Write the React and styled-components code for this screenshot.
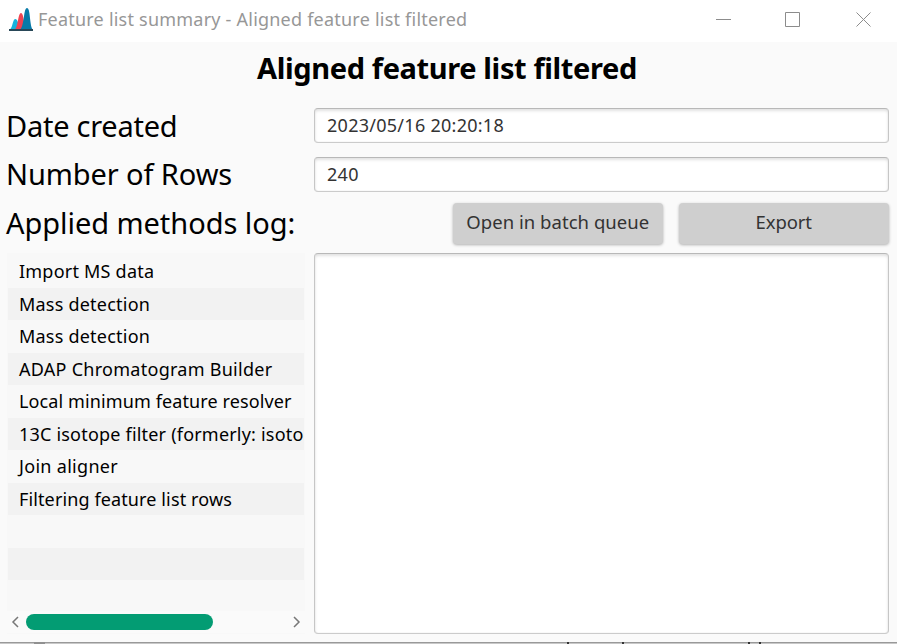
import React from "react";
import styled, { createGlobalStyle } from "styled-components";

const Global = createGlobalStyle`
  * { box-sizing: border-box; }
  body { margin: 0; overflow: hidden; background: #fff; font-family: "Noto Sans", "Open Sans", sans-serif; }
`;

const Window = styled.div`
  width: 899px;
  height: 644px;
  display: flex;
  flex-direction: column;
  background: #fff;
`;

const TitleBar = styled.header`
  height: 42px;
  flex: none;
  display: flex;
  align-items: flex-start;
  padding-left: 9px;
`;

const AppIcon = styled.svg`
  width: 24px;
  height: 24px;
  margin-top: 7px;
  flex: none;
`;

const Text = styled.span`
  display: block;
  white-space: nowrap;
  font-size: ${(p) => p.$size || 18}px;
  letter-spacing: ${(p) => p.$spacing || 0}px;
`;

const WindowTitle = styled(Text)`
  margin: 7px 0 0 5px;
  line-height: 24px;
  color: #979797;
  flex: 1;
`;

const WindowControls = styled.svg`
  width: 183px;
  height: 42px;
  flex: none;
`;

const Body = styled.main`
  height: 600px;
  width: 897px;
  background: #fafafa;
  padding: 0 8px 0 7px;
`;

const Heading = styled.h1`
  margin: 0;
  height: 66px;
  padding: 6px 2px 0 0;
  display: flex;
  justify-content: center;
  line-height: 40px;
  color: #000;
`;

const FieldRow = styled.div`
  display: grid;
  grid-template-columns: 307px 575px;
  height: ${(p) => p.$height}px;
`;

const Label = styled(Text)`
  margin-left: -1px;
  line-height: ${(p) => p.$line}px;
  color: #000;
`;

const Field = styled.div`
  height: 35px;
  border: 1px solid #c4c4c4;
  border-color: #b8b8b8 #c6c6c6 #cbcbcb;
  border-radius: 4px;
  background: #fff;
  box-shadow: inset 0 2px 3px #e2e2e2, inset 0 0 1px #ccc;
  padding: 0 12px;
  line-height: 33px;
  color: #333;
`;

const Actions = styled.div`
  display: flex;
  justify-content: flex-end;
  gap: 15.5px;
`;

const Button = styled.button`
  width: 210.5px;
  height: 41px;
  border: 0;
  border-radius: 4px;
  background: #cfcfcf;
  box-shadow: 0 1px 3px rgba(0, 0, 0, 0.3);
  display: flex;
  justify-content: center;
  padding: 0;
  font-family: inherit;
  line-height: 38px;
  color: #333;
`;

const Panels = styled.div`
  display: grid;
  grid-template-columns: 298px 575px;
  gap: 9px;
  height: 381px;
`;

const MethodPanel = styled.section`
  display: flex;
  flex-direction: column;
  background: #f8f8f8;
  padding: 2px 1px 0;
  overflow: hidden;
`;

const MethodList = styled.ul`
  list-style: none;
  margin: 0;
  padding: 0;
  height: 356px;
`;

const MethodRow = styled.li`
  height: 32.5px;
  line-height: 32px;
  padding-left: 11px;
  color: #000;
  background: ${(p) => (p.$shaded ? "#f2f2f2" : "#f8f8f8")};
`;

const Scrollbar = styled.div`
  height: 22px;
  flex: none;
  display: flex;
  align-items: center;
  margin: 0 -1px;
  padding: 0 4px 0 4px;
  background: #fafafa;
`;

const Chevron = styled.svg`
  width: 8px;
  height: 14px;
  flex: none;
`;

const Track = styled.div`
  flex: 1;
  height: 16px;
  padding: 0 7px;
`;

const Thumb = styled.div`
  width: 187px;
  height: 16px;
  border-radius: 8px;
  background: #039c73;
`;

const LogArea = styled(Field)`
  height: 381px;
`;

const EdgeStrip = styled.svg`
  width: 899px;
  height: 2px;
  flex: none;
`;

const methods = [
  ["Import MS data", 0.22],
  ["Mass detection", 0.22],
  ["Mass detection", 0.22],
  ["ADAP Chromatogram Builder", 0.27],
  ["Local minimum feature resolver", 0.11],
  ["13C isotope filter (formerly: isoto", 0.2],
  ["Join aligner", 0.3],
  ["Filtering feature list rows", 0.12],
  ["", 0],
  ["", 0],
];

export default function App() {
  return (
    <Window>
      <Global />
      <TitleBar>
        <AppIcon viewBox="0 0 24 24">
          <path d="M1 22.500C4 20 3.500 12 6.500 12C9.500 12 9.500 21 12 22.500Z" fill="#16b3dc" />
          <path d="M6 22.500C9.500 18 9 6 12 6C15 6 14.500 19 18 22.500Z" fill="#f04452" />
          <path d="M11.500 22.500C15.500 17 14.500 1 18 1C21.500 1 20.500 17 23.500 22.500Z" fill="#087aa8" />
          <path d="M0 22H24V24H0Z" fill="#294858" />
        </AppIcon>
        <WindowTitle $size={18} $spacing={0.22}>Feature list summary - Aligned feature list filtered</WindowTitle>
        <WindowControls viewBox="0 0 183 42" fill="none" stroke="#8c8c8c">
          <path d="M0 19.500H15M69.500 12.500H83.500V26.500H69.500ZM140.500 12.500L154.500 26.500M154.500 12.500L140.500 26.500" />
        </WindowControls>
      </TitleBar>
      <Body>
        <Heading>
          <Text $size={29} $spacing={-0.38}>Aligned feature list filtered</Text>
        </Heading>
        <FieldRow $height={49}>
          <Label $size={29} $spacing={-0.25} $line={36}>Date created</Label>
          <Field><Text $size={18} $spacing={0.27}>2023/05/16 20:20:18</Text></Field>
        </FieldRow>
        <FieldRow $height={46}>
          <Label $size={29} $spacing={-0.1} $line={34}>Number of Rows</Label>
          <Field><Text $size={18} $spacing={0.27}>240</Text></Field>
        </FieldRow>
        <FieldRow $height={50}>
          <Label $size={29} $spacing={-0.05} $line={40}>Applied methods log:</Label>
          <Actions>
            <Button><Text $size={18.5} $spacing={0.04}>Open in batch queue</Text></Button>
            <Button><Text $size={18.5} $spacing={-0.1}>Export</Text></Button>
          </Actions>
        </FieldRow>
        <Panels>
          <MethodPanel>
            <MethodList>
              {methods.map(([name, spacing], i) => (
                <MethodRow key={i} $shaded={i % 2 === 1}>
                  <Text $size={18} $spacing={spacing}>{name}</Text>
                </MethodRow>
              ))}
            </MethodList>
            <Scrollbar>
              <Chevron viewBox="0 0 8 14" fill="none" stroke="#777" strokeWidth="1.5"><path d="M7 2L2 7L7 12" /></Chevron>
              <Track><Thumb /></Track>
              <Chevron viewBox="0 0 8 14" fill="none" stroke="#777" strokeWidth="1.5"><path d="M1 2L6 7L1 12" /></Chevron>
            </Scrollbar>
          </MethodPanel>
          <LogArea />
        </Panels>
      </Body>
      <EdgeStrip viewBox="0 0 899 2">
        <path d="M0 0H897V1H0Z" fill="#999" />
        <path d="M0 1H897V2H0Z" fill="#c8c8c8" />
        <path d="M34 0H45V2H34Z" fill="#909090" />
        <path d="M567 0h2v2h-2ZM622 0h2v2h-2ZM748 0h2v2h-2ZM759 0h2v2h-2Z" fill="#333" />
      </EdgeStrip>
    </Window>
  );
}
